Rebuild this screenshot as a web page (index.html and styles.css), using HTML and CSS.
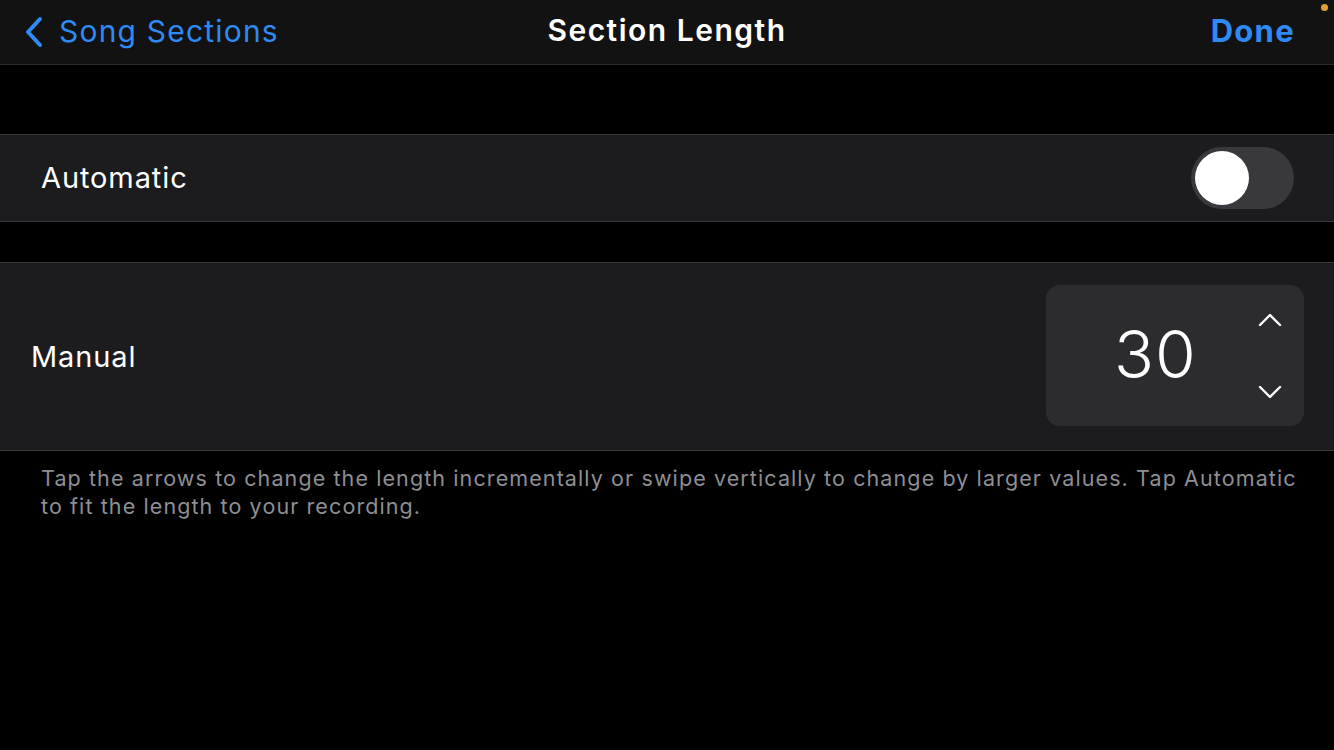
FILE: index.html
```html
<!DOCTYPE html>
<html lang="en">
<head>
<meta charset="utf-8">
<title>Section Length</title>
<link rel="stylesheet" href="styles.css">
</head>
<body>
<div class="screen">
  <header class="navbar">
    <div class="nav-back">
      <svg class="chev" width="20" height="32" viewBox="0 0 20 32"><path d="M16 3 L4 16 L16 29" fill="none" stroke="#2f8af5" stroke-width="4" stroke-linecap="round" stroke-linejoin="round"/></svg>
      <span>Song Sections</span>
    </div>
    <div class="nav-title">Section Length</div>
    <div class="nav-done">Done</div>
    <span class="dot"></span>
  </header>
  <div class="gap-top"></div>
  <section class="row row-auto">
    <span class="label">Automatic</span>
    <div class="toggle"><span class="knob"></span></div>
  </section>
  <div class="gap-mid"></div>
  <section class="row row-manual">
    <span class="label label-manual">Manual</span>
    <div class="stepper">
      <span class="value">30</span>
      <div class="arrows">
        <svg width="28" height="18" viewBox="0 0 28 18"><path d="M4 14 L14 4 L24 14" fill="none" stroke="#fff" stroke-width="2.4" stroke-linecap="round" stroke-linejoin="round"/></svg>
        <svg width="28" height="18" viewBox="0 0 28 18"><path d="M4 4 L14 14 L24 4" fill="none" stroke="#fff" stroke-width="2.4" stroke-linecap="round" stroke-linejoin="round"/></svg>
      </div>
    </div>
  </section>
  <p class="footer">Tap the arrows to change the length incrementally or swipe vertically to change by larger values. Tap Automatic to fit the length to your recording.</p>
</div>
</body>
</html>
```

FILE: styles.css
```css
* { box-sizing: border-box; }
html, body { margin: 0; padding: 0; background: #000; }
body { font-family: Inter, "Noto Sans", sans-serif; color: #fff; }
.screen { width: 1334px; height: 750px; background: #000; overflow: hidden; }
.navbar {
  position: relative;
  height: 65px;
  background: #121212;
  border-bottom: 1px solid #2a2a2c;
  display: flex;
  align-items: center;
  justify-content: space-between;
  padding: 0 39px 0 24px;
}
.nav-back { display: flex; align-items: center; gap: 15px; color: #2f8af5; font-size: 30px; letter-spacing: 1.2px; }
.nav-back span { margin-top: -2px; }
.chev { margin-top: -1px; }
.nav-title {
  position: absolute; left: 0; right: 0; top: 0; height: 64px;
  display: flex; align-items: center; justify-content: center;
  font-size: 30px; font-weight: 600; margin-top: -2px; pointer-events: none;
  letter-spacing: 1.5px;
}
.nav-done { color: #2f8af5; font-size: 31px; font-weight: 700; margin-top: -3px; letter-spacing: 1.3px; }
.dot { position: absolute; right: 6px; top: 4px; width: 7px; height: 7px; border-radius: 50%; background: #e2a033; }
.gap-top { height: 69px; }
.gap-mid { height: 40px; }
.row {
  background: #1c1c1e;
  border-top: 1px solid #38383a;
  border-bottom: 1px solid #38383a;
  display: flex;
  align-items: center;
  justify-content: space-between;
}
.row-auto { height: 88px; padding: 0 40px 0 41px; }
.row-manual { height: 189px; padding: 0 30px 0 31px; }
.label { font-size: 29px; letter-spacing: 0.9px; margin-top: -1px; }
.toggle {
  width: 103px; height: 62px; border-radius: 31px; background: #39393d;
  padding: 4px; display: flex; align-items: center;
}
.knob { width: 54px; height: 54px; border-radius: 50%; background: #fff; }
.stepper {
  width: 258px; height: 141px; border-radius: 14px; background: #2c2c2f;
  display: flex; align-items: center; padding: 0 20px 0 68px;
  justify-content: space-between; margin-top: -3px;
}
.value { font-size: 66px; font-weight: 300; letter-spacing: 1px; margin-top: -2px; }
.arrows { display: flex; flex-direction: column; gap: 54px; margin-top: 2px; }
.footer {
  margin: 13px 0 0; padding: 0 34px 0 41px;
  font-size: 21.5px; line-height: 28px; color: #8e8e93; letter-spacing: 1.1px;
}
```
